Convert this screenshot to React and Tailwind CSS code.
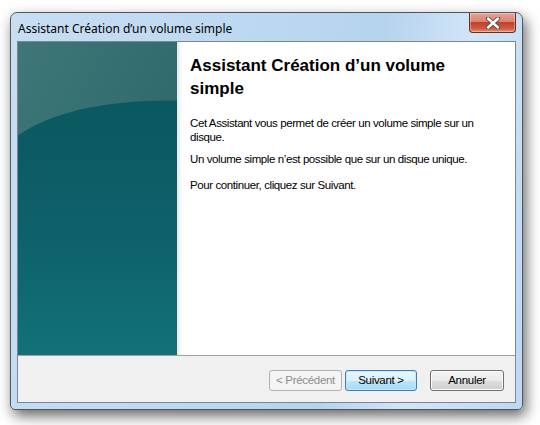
import React from "react";

const uiFont = { fontFamily: '"Liberation Sans", Arial, sans-serif' };

const CloseButton = () => (
  <div className="h-[20px] w-[47px] rounded-b-[4px] border border-t-0 border-[#6b2b22] bg-[linear-gradient(#e8a493_0%,#d98470_45%,#c4402a_50%,#cd5a3e_80%,#e0907a_100%)] flex items-center justify-center shadow-[inset_0_0_0_1px_rgba(255,255,255,0.35)]">
    <svg width="16" height="12" viewBox="0 0 16 12">
      <path d="M3 1.5 L13 10.5 M13 1.5 L3 10.5" stroke="#4a4a4a" strokeWidth="4.2" strokeLinecap="round" />
      <path d="M3 1.5 L13 10.5 M13 1.5 L3 10.5" stroke="#ffffff" strokeWidth="2.4" strokeLinecap="round" />
    </svg>
  </div>
);

const Button = ({ children, disabled, isDefault, width }) => {
  let cls = "h-[21px] rounded-[3px] border text-[11.5px] tracking-[-0.3px] flex items-center justify-center ";
  if (disabled) {
    cls += "border-[#adb2b5] bg-[#f4f4f4] text-[#8d8d8d]";
  } else if (isDefault) {
    cls += "border-[#3c7fb1] text-black bg-[linear-gradient(#eaf6fd_0%,#d9f0fc_50%,#bee6fd_51%,#a7d9f5_100%)] shadow-[inset_0_0_0_1px_#c6e7f8]";
  } else {
    cls += "border-[#707070] text-black bg-[linear-gradient(#f2f2f2_0%,#ebebeb_50%,#dddddd_51%,#cfcfcf_100%)] shadow-[inset_0_0_0_1px_#fcfcfc]";
  }
  return <div className={cls + " " + width}>{children}</div>;
};

const SidePanel = () => (
  <div className="w-[159px] shrink-0 relative">
    <svg className="absolute inset-0 w-full h-full" viewBox="0 0 159 315" preserveAspectRatio="none">
      <defs>
        <linearGradient id="top" x1="0" y1="0" x2="1" y2="1">
          <stop offset="0" stopColor="#3f7777" />
          <stop offset="1" stopColor="#266167" />
        </linearGradient>
        <linearGradient id="bottom" x1="0" y1="0" x2="0" y2="1">
          <stop offset="0" stopColor="#0b5860" />
          <stop offset="0.55" stopColor="#0e616b" />
          <stop offset="1" stopColor="#127178" />
        </linearGradient>
      </defs>
      <rect x="0" y="0" width="159" height="315" fill="url(#top)" />
      <path d="M0 94 C 35 70, 90 58, 159 59 L159 315 L0 315 Z" fill="url(#bottom)" />
    </svg>
  </div>
);

export default function App() {
  return (
    <div className="w-[540px] h-[425px] bg-white pl-[10px] pt-[12px]" style={uiFont}>
      <div className="w-[513px] h-[398px] rounded-t-[7px] rounded-b-[5px] border border-[#4f5660] bg-[linear-gradient(100deg,#c7def3_0%,#bcd8f1_45%,#b6d3ee_65%,#d2e5f7_80%,#bdd8f1_100%)] shadow-[3px_6px_14px_rgba(0,0,0,0.6)] flex flex-col px-[6px] pb-[6px]">
        <div className="h-[28px] flex items-start justify-between">
          <div className="pt-[7px] pl-[1px] text-[12px] text-black" style={{ fontFamily: '"Noto Sans", "Liberation Sans", sans-serif' }}>
            Assistant Création d’un volume simple
          </div>
          <CloseButton />
        </div>
        <div className="flex-1 border border-[#7b8794] bg-white flex flex-col">
          <div className="flex-1 flex">
            <SidePanel />
            <div className="flex-1 pl-[13px] pr-[10px] pt-[12px] shadow-[inset_6px_0_5px_-4px_rgba(0,0,0,0.12)]">
              <h1 className="w-[270px] text-[17px] leading-[23px] font-bold text-black">
                Assistant Création d’un volume simple
              </h1>
              <div className="mt-[16px] text-[11.5px] tracking-[-0.4px] leading-[14px] text-black">
                <p>Cet Assistant vous permet de créer un volume simple sur un disque.</p>
                <p className="mt-[8px]">Un volume simple n’est possible que sur un disque unique.</p>
                <p className="mt-[12px]">Pour continuer, cliquez sur Suivant.</p>
              </div>
            </div>
          </div>
          <div className="h-[47px] border-t border-[#a0a0a0] bg-[#f0f0f0] flex items-center justify-end pr-[11px] pt-[3px]">
            <Button disabled width="w-[73px]">&lt; Précédent</Button>
            <div className="w-[3px]" />
            <Button isDefault width="w-[72px]">Suivant &gt;</Button>
            <div className="w-[13px]" />
            <Button width="w-[74px]">Annuler</Button>
          </div>
        </div>
      </div>
    </div>
  );
}
